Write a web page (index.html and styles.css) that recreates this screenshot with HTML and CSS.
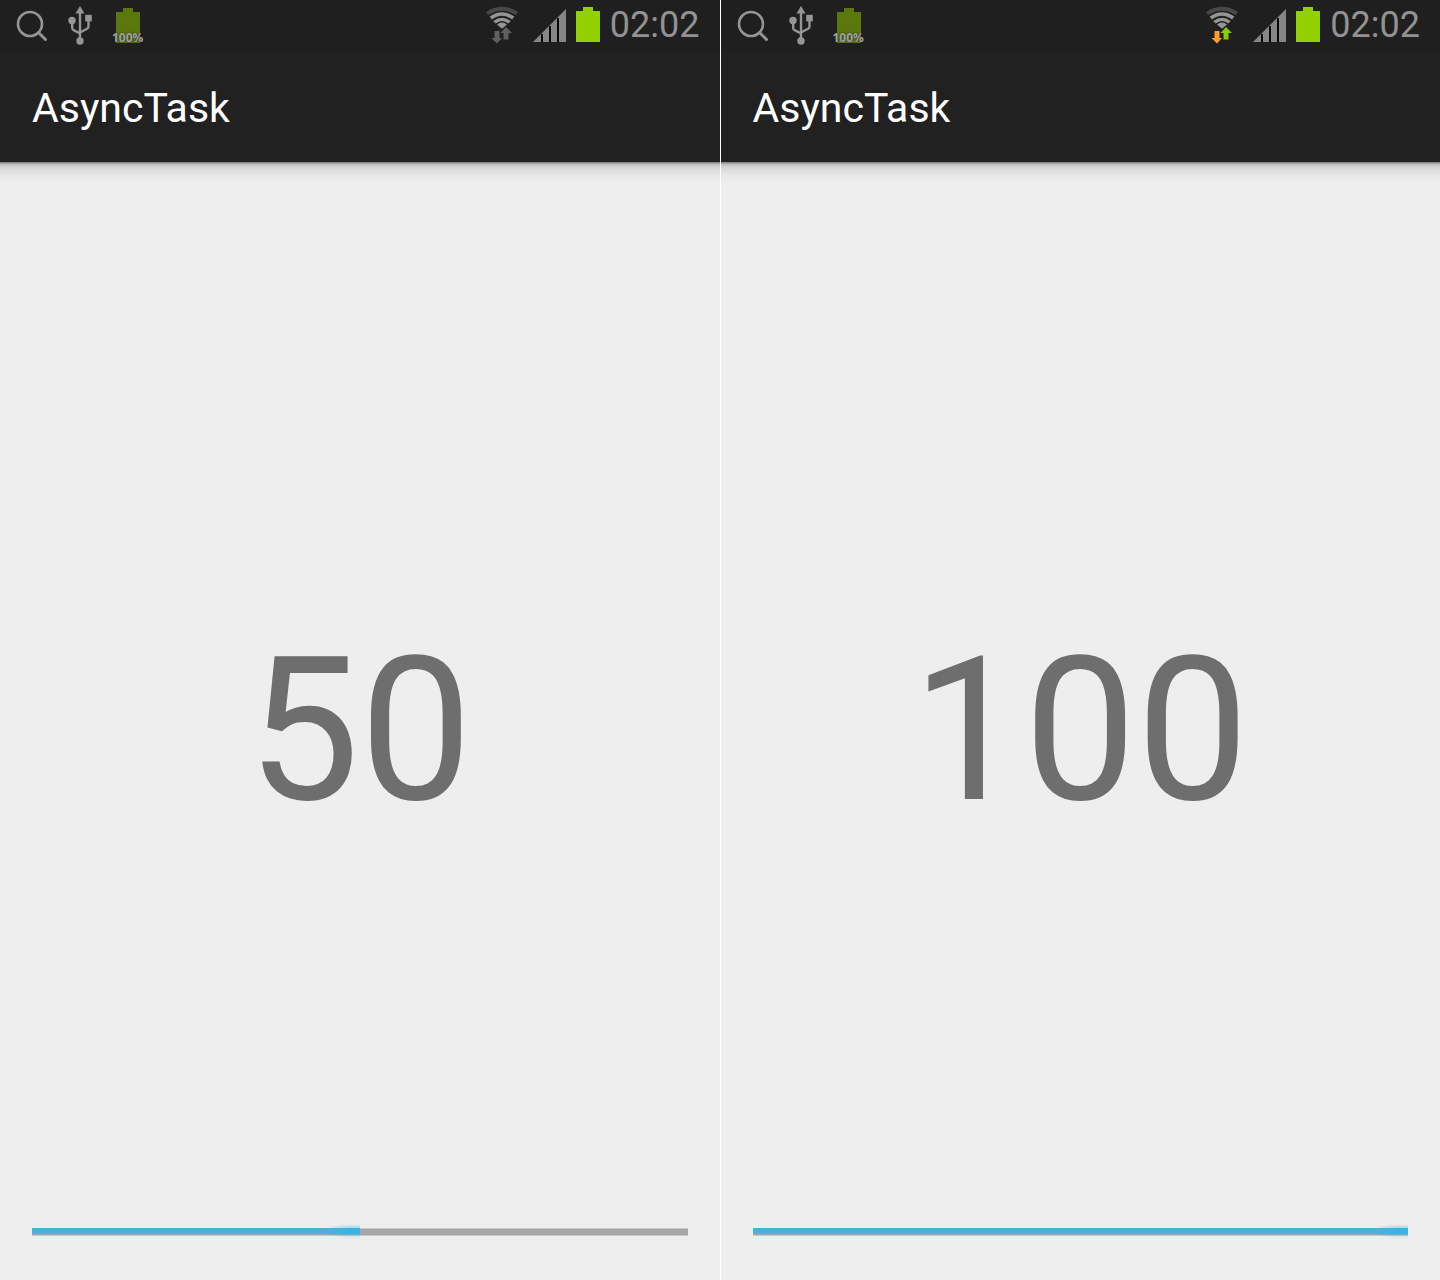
FILE: index.html
```html
<!DOCTYPE html>
<html lang="en">
<head>
<meta charset="utf-8">
<meta name="viewport" content="width=device-width, initial-scale=1">
<title>AsyncTask</title>
<link rel="stylesheet" href="styles.css">
</head>
<body>
<svg class="defs" aria-hidden="true">
  <symbol id="search" viewBox="0 0 32 40">
    <circle cx="14" cy="19" r="12" fill="none" stroke="#959595" stroke-width="2.6"/>
    <path d="M22.500 27.500L29.500 34.500" stroke="#959595" stroke-width="3" stroke-linecap="round"/>
  </symbol>
  <symbol id="usb" viewBox="0 0 24 40">
    <g fill="none" stroke="#959595" stroke-width="2.400">
      <path d="M12 7V36M4.200 15v8q0 1.500 1.500 2.200L12 28.500M20.500 13v8.500q0 1.500-1.500 2.300L12 27.500"/>
    </g>
    <g fill="#959595">
      <path d="M12 1l4.500 7.500h-9z"/>
      <circle cx="4" cy="15.500" r="3.700"/>
      <rect x="17.200" y="9.800" width="6.600" height="6.600"/>
      <circle cx="12" cy="36" r="3.700"/>
    </g>
  </symbol>
  <symbol id="battery" viewBox="0 0 24 35">
    <path d="M7 0h10v4h7v31H0V4h7z" fill="currentColor"/>
  </symbol>
  <symbol id="wifi" viewBox="0 0 32 38">
    <path d="M0 6Q16-4.500 32 6l-2.300 3Q16 .500 2.300 9z" fill="#484848"/>
    <path d="M3.600 10.500Q16 1.800 28.400 10.500l-2.400 3Q16 6 6 13.500z" fill="#959595"/>
    <path d="M7.300 15Q16 8.300 24.700 15l-2.400 2.500Q16 12.500 9.700 17.500z" fill="#959595"/>
    <path d="M11 18.500q5-4 10 0l-5 4.200z" fill="#959595"/>
    <path class="down" d="M8.500 25h5v7h2.500L11 37.500l-5.500-5.500h3z"/>
    <path class="up" d="M17.500 33.500v-6.500h-3L20 21l6 6h-3.500v6.500z"/>
  </symbol>
  <symbol id="signal" viewBox="0 0 33 33">
    <path d="M0 33L33 0v33z" fill="#868686"/>
    <path d="M8 25h2v8H8zM16 17h2v16h-2zM24 9h2v24h-2z" fill="#060606"/>
  </symbol>
</svg>

<main class="screens">
  <section class="screen">
    <div class="status">
      <svg class="search"><use href="#search"/></svg>
      <svg class="usb"><use href="#usb"/></svg>
      <div class="charge"><svg class="battery dim"><use href="#battery"/></svg><span class="percent">100%</span></div>
      <svg class="wifi"><use href="#wifi"/></svg>
      <svg class="signal"><use href="#signal"/></svg>
      <svg class="battery"><use href="#battery"/></svg>
      <time class="clock">02:02</time>
    </div>
    <header class="bar"><h1 class="title">AsyncTask</h1></header>
    <div class="content">
      <output class="count">50</output>
      <progress class="progress" value="50" max="100" aria-label="Task progress"></progress>
    </div>
  </section>
  <section class="screen">
    <div class="status">
      <svg class="search"><use href="#search"/></svg>
      <svg class="usb"><use href="#usb"/></svg>
      <div class="charge"><svg class="battery dim"><use href="#battery"/></svg><span class="percent">100%</span></div>
      <svg class="wifi active"><use href="#wifi"/></svg>
      <svg class="signal"><use href="#signal"/></svg>
      <svg class="battery"><use href="#battery"/></svg>
      <time class="clock">02:02</time>
    </div>
    <header class="bar"><h1 class="title">AsyncTask</h1></header>
    <div class="content">
      <output class="count">100</output>
      <progress class="progress" value="100" max="100" aria-label="Task progress"></progress>
    </div>
  </section>
</main>
</body>
</html>
```
FILE: styles.css
```css
* { box-sizing: border-box; }

body {
  margin: 0;
  background: #fff;
  font-family: Roboto, "Liberation Sans", sans-serif;
}

.defs { position: absolute; width: 0; height: 0; }

.screens {
  display: grid;
  grid-template-columns: 1fr 1fr;
  gap: 1px;
  min-height: 100vh;
}

.screen {
  display: flex;
  flex-direction: column;
  background: #eee;
}

.status {
  display: flex;
  align-items: flex-start;
  height: 50px;
  padding: 0 20px 0 16px;
  background: #1f1f1f;
}

.status svg { display: block; flex: none; }

.search { width: 32px; height: 40px; margin-top: 5px; }
.usb { width: 24px; height: 40px; margin: 5px 0 0 20px; }
.battery { width: 24px; height: 35px; margin-top: 7px; color: #92d000; }
.charge { position: relative; margin-left: 24px; }
.dim { height: 37px; color: #5a780c; }

.percent {
  position: absolute;
  left: -4px;
  bottom: -1px;
  font: bold 12px/14px "Open Sans", sans-serif;
  color: #a0a0a0;
  text-shadow: 0 0 2px #222;
}

.wifi {
  --down: #606060;
  --up: #606060;
  width: 32px;
  height: 38px;
  margin: 6px 0 0 auto;
}
.wifi.active { --down: #ff9c2c; --up: #88cc00; }
.down { fill: var(--down); }
.up { fill: var(--up); }

.signal { width: 33px; height: 33px; margin: 9px 10px 0 15px; }

.clock {
  margin-left: 10px;
  font-size: 36px;
  line-height: 50px;
  color: #929292;
}

.bar {
  position: relative;
  display: flex;
  align-items: center;
  height: 112px;
  padding: 4px 32px 0;
  background: #212121;
}

/* Soft shadow under the action bar */
.bar::after {
  content: "";
  position: absolute;
  top: 100%;
  left: 0;
  right: 0;
  height: 20px;
  background: linear-gradient(#777 0, #b4b4b4 2px, #d0d0d0 4px, #dedede 8px, #e8e8e8 14px, #eee);
}

.title {
  margin: 0;
  font-size: 41px;
  font-weight: 400;
  line-height: 48px;
  color: #fff;
}

.content {
  flex: 1;
  display: flex;
  flex-direction: column;
  padding: 76px 32px 40px;
}

.count {
  flex: 1;
  display: flex;
  align-items: center;
  justify-content: center;
  font-size: 200px;
  line-height: 234px;
  color: #6e6e6e;
}

.progress {
  appearance: none;
  display: block;
  width: 100%;
  height: 16px;
  border: 0;
  background: none;
}

.progress::-webkit-progress-inner-element { height: 16px; }

.progress::-webkit-progress-bar {
  height: 16px;
  background: linear-gradient(transparent 4px, #c8c8c8 4px 5px, #a5a5a5 5px 11px, #c8c8c8 11px 12px, transparent 12px);
}

.progress::-webkit-progress-value {
  height: 16px;
  background:
    linear-gradient(90deg, transparent, #33b5e5) right 4px / 32px 6px no-repeat,
    linear-gradient(#4bb1d9, #4bb1d9) 0 4px / 100% 6px no-repeat,
    radial-gradient(ellipse 32px 7px at calc(100% - 8px) 7px, #33b5e5aa, transparent);
}
```
